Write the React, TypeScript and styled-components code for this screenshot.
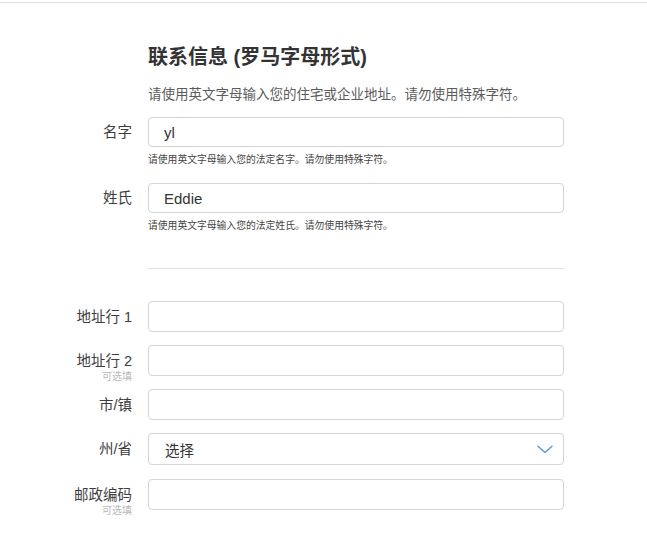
import React from "react";
import styled, { createGlobalStyle } from "styled-components";

const GlobalStyle = createGlobalStyle`
  html, body {
    margin: 0;
    padding: 0;
    background: #ffffff;
  }
  body {
    font-family: "Liberation Sans", "Noto Sans CJK SC", sans-serif;
    color: #333333;
  }
`;

const Page = styled.div`
  width: 647px;
  min-height: 539px;
  padding-top: 2px;
  box-sizing: border-box;
`;

const TopRule = styled.div`
  height: 1px;
  background: #e2e2e2;
  box-shadow: 0 1px 2px rgba(0, 0, 0, 0.05);
`;

const Form = styled.div`
  margin-left: 60px;
  width: 504px;
`;

const Heading = styled.div`
  padding-left: 88px;
`;

const Title = styled.h2`
  margin: 40px 0 0;
  font-size: 20px;
  line-height: 28px;
  font-weight: 600;
  color: #333333;
`;

const Subtitle = styled.p`
  margin: 14px 0 0;
  font-size: 13.5px;
  line-height: 20px;
  color: #5c5c5c;
`;

const Row = styled.div<{ $top: number }>`
  display: grid;
  grid-template-columns: 72px 416px;
  column-gap: 16px;
  align-items: center;
  margin-top: ${(p) => p.$top}px;
`;

const LabelCell = styled.div`
  display: flex;
  flex-direction: column;
  align-items: flex-end;
  text-align: right;
`;

const Label = styled.label`
  font-size: 14.5px;
  line-height: 20px;
  color: #3d3d3d;
  white-space: nowrap;
`;

const Optional = styled.span`
  font-size: 10px;
  line-height: 12px;
  color: #b8b8b8;
  margin-bottom: -12px;
`;

const Input = styled.input<{ $h: number }>`
  box-sizing: border-box;
  width: 416px;
  height: ${(p) => p.$h}px;
  padding: 0 15px;
  border: 1px solid #d4d4d8;
  border-radius: 4px;
  background: #ffffff;
  font-family: inherit;
  font-size: 15px;
  color: #333333;
  outline: none;
`;

const Help = styled.div`
  margin: 6px 0 0 88px;
  font-size: 9.8px;
  line-height: 14px;
  color: #444444;
  white-space: nowrap;
`;

const Divider = styled.hr`
  margin: 35px 0 0 88px;
  width: 416px;
  border: 0;
  border-top: 1px solid #e3e3e3;
`;

const SelectBox = styled.div`
  box-sizing: border-box;
  width: 416px;
  height: 32px;
  padding: 0 10px 0 16px;
  border: 1px solid #d4d4d8;
  border-radius: 4px;
  display: flex;
  align-items: center;
  justify-content: space-between;
  font-size: 14.5px;
  color: #333333;
`;

const Chevron = () => (
  <svg width="16" height="9" viewBox="0 0 16 9" fill="none">
    <path d="M1 1.2 L8 7.6 L15 1.2" stroke="#5a9bd0" strokeWidth="1.4" strokeLinecap="round" strokeLinejoin="round" />
  </svg>
);

type FieldProps = {
  label: string;
  optional?: boolean;
  value?: string;
  top: number;
  h?: number;
};

const Field = ({ label, optional, value, top, h = 31 }: FieldProps) => (
  <Row $top={top}>
    <LabelCell>
      <Label>{label}</Label>
      {optional && <Optional>可选填</Optional>}
    </LabelCell>
    <Input $h={h} defaultValue={value} readOnly />
  </Row>
);

export default function App() {
  return (
    <Page>
      <GlobalStyle />
      <TopRule />
      <Form>
        <Heading>
          <Title>联系信息 (罗马字母形式)</Title>
          <Subtitle>请使用英文字母输入您的住宅或企业地址。请勿使用特殊字符。</Subtitle>
        </Heading>

        <Field label="名字" value="yl" top={12} h={30} />
        <Help>请使用英文字母输入您的法定名字。请勿使用特殊字符。</Help>
        <Field label="姓氏" value="Eddie" top={16} h={30} />
        <Help>请使用英文字母输入您的法定姓氏。请勿使用特殊字符。</Help>

        <Divider />

        <Field label="地址行 1" top={32} />
        <Field label="地址行 2" optional top={13} />
        <Field label="市/镇" top={13} />
        <Row $top={13}>
          <LabelCell>
            <Label>州/省</Label>
          </LabelCell>
          <SelectBox>
            <span>选择</span>
            <Chevron />
          </SelectBox>
        </Row>
        <Field label="邮政编码" optional top={14} />
      </Form>
    </Page>
  );
}
